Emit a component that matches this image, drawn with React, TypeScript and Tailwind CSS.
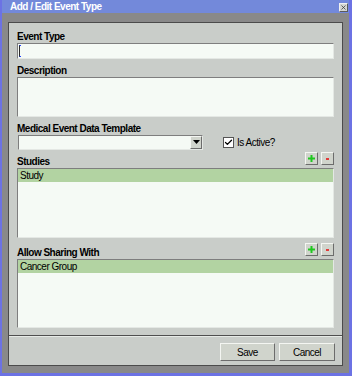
import { Check, X } from "lucide-react";

const FONT = "font-['Liberation_Sans',Arial,sans-serif] tracking-[-0.5px]";

const SUNKEN =
  "bg-[#f5faf5] border border-t-[#7e7e7e] border-l-[#7e7e7e] border-b-[#e4e8e4] border-r-[#e4e8e4]";
const RAISED =
  "bg-[#d0d4cc] border border-t-[#f4f6f2] border-l-[#f4f6f2] border-b-[#6c6c6c] border-r-[#6c6c6c]";

function Label({ children }: { children: React.ReactNode }) {
  return (
    <div className="h-[13px] leading-[13px] text-[10px] font-bold text-black">
      {children}
    </div>
  );
}

function AddRemove() {
  return (
    <div className="flex gap-[3px]">
      <button className={`w-[13px] h-[13px] flex items-center justify-center ${RAISED}`}>
        <svg width="7" height="7" viewBox="0 0 7 7">
          <rect x="2.5" y="0" width="2" height="7" fill="#1fc81f" />
          <rect x="0" y="2.5" width="7" height="2" fill="#1fc81f" />
        </svg>
      </button>
      <button className={`w-[13px] h-[13px] flex items-center justify-center ${RAISED}`}>
        <div className="w-[3px] h-[2px] bg-[#e23a3a]" />
      </button>
    </div>
  );
}

function ListBox({ item, height }: { item: string; height: string }) {
  return (
    <div className={`${SUNKEN} ${height}`}>
      <div className="h-[13px] leading-[13px] bg-[#b2d3a2] pl-[2px] text-[10px] text-black">
        {item}
      </div>
    </div>
  );
}

export default function App() {
  return (
    <div className={`w-[352px] h-[376px] bg-[#6c72e4] pl-[2px] pr-[3px] pb-[3px] flex flex-col ${FONT}`}>
      {/* Title bar */}
      <div className="h-[13px] bg-[#7389da] flex items-start justify-between pl-[8px] pr-[1px]">
        <span className="text-[10px] leading-[13px] font-bold text-white">
          Add / Edit Event Type
        </span>
        <div className="mt-[3px] w-[9px] h-[9px] bg-[#d4d6d2] border border-t-[#f0f0f0] border-l-[#f0f0f0] border-b-[#5a5a5a] border-r-[#5a5a5a] flex items-center justify-center">
          <X size={7} strokeWidth={2.5} color="#333" />
        </div>
      </div>

      {/* Window frame */}
      <div className="flex-1 bg-[#898989] pt-[9px] px-[6px] pb-[7px] flex">
        <div className="flex-1 border border-[#4b4b4b] bg-[#c9cdc9] flex flex-col">
          <div className="px-[8px] pt-[7px] pb-[7px] flex flex-col">
            <Label>Event Type</Label>
            <div className={`h-[16px] ${SUNKEN} flex items-center pl-[1px]`}>
              <div className="w-[2px] h-[12px] border-l border-[#2a2a2a] border-t border-b border-t-[#2040ff] border-b-[#2040ff]" />
            </div>

            <div className="mt-[5px]">
              <Label>Description</Label>
            </div>
            <div className={`h-[40px] ${SUNKEN}`} />

            <div className="mt-[5px]">
              <Label>Medical Event Data Template</Label>
            </div>
            <div className="h-[15px] flex items-center">
              <div className={`ml-[1px] w-[185px] h-[15px] ${SUNKEN} flex justify-end`}>
                <div className={`w-[12px] h-[13px] ${RAISED} flex items-center justify-center`}>
                  <svg width="7" height="5" viewBox="0 0 7 5">
                    <path d="M0 0 H7 L3.5 4 Z" fill="#000" />
                  </svg>
                </div>
              </div>
              <div className="ml-[20px] w-[11px] h-[11px] bg-white border border-[#555] flex items-center justify-center">
                <Check size={9} strokeWidth={3.5} color="#000" />
              </div>
              <span className="ml-[3px] text-[10px] text-black">Is Active?</span>
            </div>

            <div className="h-[18px] flex justify-between items-start">
              <div className="self-end">
                <Label>Studies</Label>
              </div>
              <div className="mt-[2px]">
                <AddRemove />
              </div>
            </div>
            <ListBox item="Study" height="h-[70px]" />

            <div className="h-[21px] flex justify-between items-start">
              <div className="self-end">
                <Label>Allow Sharing With</Label>
              </div>
              <div className="mt-[5px]">
                <AddRemove />
              </div>
            </div>
            <ListBox item="Cancer Group" height="h-[69px]" />
          </div>

          {/* Footer */}
          <div className="border-t border-[#4f4f4f] border-b border-b-[#e6eae6]" />
          <div className="flex-1 flex justify-end items-start gap-[4px] pt-[6px] pr-[7px]">
            <button className={`w-[55px] h-[18px] text-[10px] text-black ${RAISED}`}>Save</button>
            <button className={`w-[56px] h-[18px] text-[10px] text-black ${RAISED}`}>Cancel</button>
          </div>
        </div>
      </div>
    </div>
  );
}
